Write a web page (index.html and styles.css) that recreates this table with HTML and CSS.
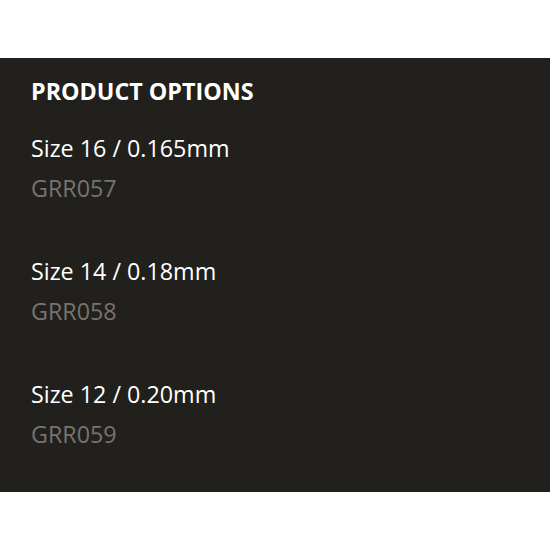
FILE: index.html
```html
<!DOCTYPE html>
<html>
<head>
<meta charset="utf-8">
<link rel="stylesheet" href="styles.css">
</head>
<body>
<section class="panel">
  <h2 class="title">PRODUCT OPTIONS</h2>
  <ul class="options">
    <li class="option"><span class="name">Size 16 / 0.165mm</span><span class="code">GRR057</span></li>
    <li class="option"><span class="name">Size 14 / 0.18mm</span><span class="code">GRR058</span></li>
    <li class="option"><span class="name">Size 12 / 0.20mm</span><span class="code">GRR059</span></li>
  </ul>
</section>
</body>
</html>
```
FILE: styles.css
```css
html, body {
  margin: 0;
  padding: 0;
  background: #ffffff;
}
body {
  padding-top: 58px;
  font-family: "Open Sans", "Noto Sans", sans-serif;
}
.panel {
  background: #22201d;
  height: 434px;
  box-sizing: border-box;
  padding: 22px 31px 0;
}
.title {
  margin: 0;
  color: #ffffff;
  font-size: 23.3px;
  font-weight: 700;
  line-height: 23px;
}
.options {
  list-style: none;
  margin: 25px 0 0;
  padding: 0;
  display: flex;
  flex-direction: column;
  gap: 42.5px;
}
.option {
  display: flex;
  flex-direction: column;
}
.name {
  color: #ffffff;
  font-size: 23.3px;
  line-height: 40px;
}
.code {
  color: #77736e;
  font-size: 23.3px;
  line-height: 40.5px;
}
```
